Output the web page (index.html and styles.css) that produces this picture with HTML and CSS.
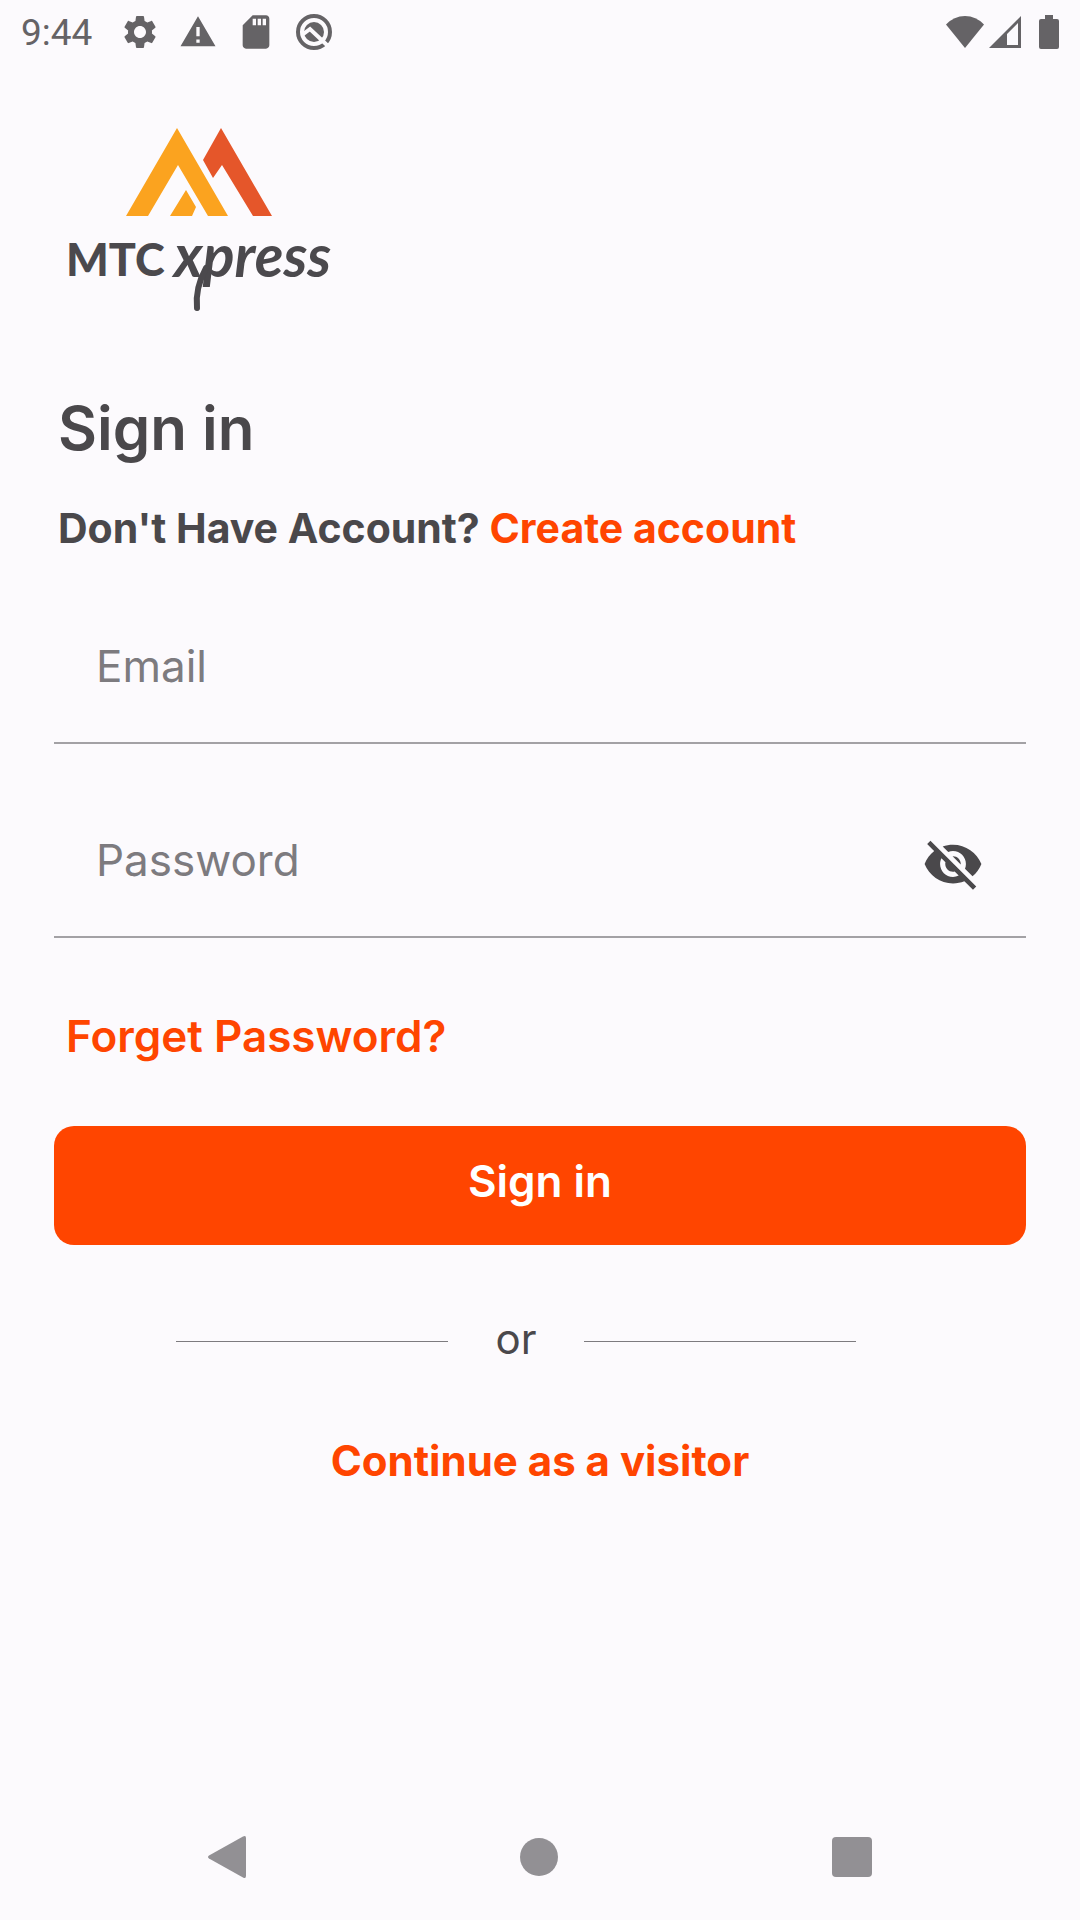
FILE: index.html
```html
<!DOCTYPE html>
<html lang="en">
<head>
    <meta charset="UTF-8">
    <meta name="viewport" content="width=device-width, initial-scale=1.0">
    <title>MTC xpress - Sign in</title>
    <link rel="stylesheet" href="styles.css">
</head>
<body>
    <!-- Status bar -->
    <header class="status-bar">
        <span class="clock">9:44</span>
        <div class="status-left">
            <svg width="40" height="40" viewBox="0 0 24 24"><path d="M19.14 12.94c.04-.3.06-.61.06-.94 0-.32-.02-.64-.07-.94l2.03-1.58c.18-.14.23-.41.12-.61l-1.92-3.32c-.12-.22-.37-.29-.59-.22l-2.39.96c-.5-.38-1.03-.7-1.62-.94l-.36-2.54c-.04-.24-.24-.41-.48-.41h-3.84c-.24 0-.43.17-.47.41l-.36 2.54c-.59.24-1.13.57-1.62.94l-2.39-.96c-.22-.08-.47 0-.59.22L2.74 8.87c-.12.21-.08.47.12.61l2.03 1.58c-.05.3-.09.63-.09.94s.02.64.07.94l-2.03 1.58c-.18.14-.23.41-.12.61l1.92 3.32c.12.22.37.29.59.22l2.39-.96c.5.38 1.03.7 1.62.94l.36 2.54c.05.24.24.41.48.41h3.84c.24 0 .44-.17.47-.41l.36-2.54c.59-.24 1.13-.56 1.62-.94l2.39.96c.22.08.47 0 .59-.22l1.92-3.32c.12-.22.07-.47-.12-.61l-2.01-1.58zM12 15.6c-1.98 0-3.6-1.62-3.6-3.6s1.62-3.6 3.6-3.6 3.6 1.62 3.6 3.6-1.62 3.6-3.6 3.6z"/></svg>
            <svg width="40" height="40" viewBox="0 0 24 24"><path d="M1.500 20.500h21L12 2.500zM13 18.500h-2v-2h2v2zm0-4h-2V9h2v5.500z"/></svg>
            <svg width="40" height="40" viewBox="0 0 24 24"><path d="M18 2h-8L4.020 8 4 20c0 1.100.9 2 2 2h12c1.100 0 2-.9 2-2V4c0-1.100-.9-2-2-2zm-6 6h-2V4h2v4zm3 0h-2V4h2v4zm3 0h-2V4h2v4z"/></svg>
            <svg width="40" height="40" viewBox="0 0 40 40">
                <circle class="ring" cx="20" cy="20" r="16"/>
                <circle cx="20" cy="20" r="10"/>
                <path class="cut" d="M8 23l8-6 18 17"/>
            </svg>
        </div>
        <div class="status-right">
            <svg width="40" height="34" viewBox="0 0 40 34"><path d="M20 33L1 9.500Q9 1 20 1t19 8.500z"/></svg>
            <svg width="34" height="34" viewBox="0 0 34 34"><path fill-rule="evenodd" d="M1 33L33 1v32zM19 19v11h11V8z"/></svg>
            <svg class="battery" width="20" height="34" viewBox="0 0 20 34"><path d="M6 0h8v4h4a2 2 0 0 1 2 2v26a2 2 0 0 1-2 2H2a2 2 0 0 1-2-2V6a2 2 0 0 1 2-2h4z"/></svg>
        </div>
    </header>

    <main class="content">
        <svg class="logo" width="300" height="220" viewBox="0 0 300 220" role="img" aria-label="MTC xpress">
            <path fill="#fba31f" d="M127 18l51 88h-20l-30-51-30 51H76zM136 80l10 17-4 9h-22z"/>
            <path fill="#e5562a" d="M171 18l51 88h-19l-31-51-9 13-10-18z"/>
            <text class="logo-mtc" x="16" y="166">MTC</text>
            <text class="logo-xpress" x="124" y="167">xpress</text>
            <path class="logo-tail" d="M156 158Q145 178 147 198"/>
        </svg>

        <h1>Sign in</h1>
        <p class="signup">Don't Have Account? <a href="#">Create account</a></p>

        <form>
            <div class="field">
                <input type="email" placeholder="Email" aria-label="Email">
            </div>
            <div class="field">
                <input type="password" placeholder="Password" aria-label="Password">
                <button type="button" class="toggle" aria-label="Show password">
                    <svg width="62" height="62" viewBox="0 0 24 24"><path d="M12 7c2.760 0 5 2.240 5 5 0 .65-.13 1.260-.36 1.830l2.920 2.920c1.510-1.260 2.700-2.890 3.430-4.750-1.730-4.390-6-7.500-11-7.500-1.400 0-2.740.25-3.980.7l2.160 2.160C10.740 7.130 11.350 7 12 7zM2 4.270l2.280 2.280.46.46C3.080 8.300 1.780 10.020 1 12c1.730 4.390 6 7.500 11 7.500 1.550 0 3.030-.3 4.380-.84l.42.42L19.730 22 21 20.730 3.270 3 2 4.270zM7.530 9.800l1.550 1.550c-.05.21-.08.43-.08.65 0 1.660 1.340 3 3 3 .22 0 .44-.03.65-.08l1.550 1.550c-.67.33-1.410.53-2.200.53-2.760 0-5-2.240-5-5 0-.79.2-1.530.53-2.200zm4.310-.78l3.150 3.150.02-.16c0-1.660-1.340-3-3-3l-.17.01z"/></svg>
                </button>
            </div>
            <a class="forget" href="#">Forget Password?</a>
            <button type="submit" class="submit">Sign in</button>
        </form>

        <div class="divider"><span>or</span></div>
        <a class="visitor" href="#">Continue as a visitor</a>
    </main>

    <!-- Navigation bar -->
    <nav class="nav-bar">
        <button type="button" aria-label="Back"><svg width="38" height="42" viewBox="0 0 38 42"><path d="M35 .5q3-1.500 3 1.500v38q0 3-3 1.500L1 22.500q-2-1.500 0-3z"/></svg></button>
        <button type="button" aria-label="Home"><svg width="38" height="38" viewBox="0 0 38 38"><circle cx="19" cy="19" r="19"/></svg></button>
        <button type="button" aria-label="Recent apps"><svg width="40" height="40" viewBox="0 0 40 40"><rect width="40" height="40" rx="4"/></svg></button>
    </nav>
</body>
</html>
```

FILE: styles.css
```css
* {
    box-sizing: border-box;
}
body {
    display: flex;
    flex-direction: column;
    min-height: 100vh;
    margin: 0;
    background-color: #fcfafd;
    color: #4a484b;
    font-family: Inter, "Open Sans", sans-serif;
}
svg {
    display: block;
}
a {
    color: #ff4500; /* Brand orange */
    text-decoration: none;
}
button {
    padding: 0;
    border: none;
    background: none;
    font-family: inherit;
    cursor: pointer;
}

/* Status bar */
.status-bar {
    display: flex;
    align-items: center;
    height: 64px;
    padding: 0 21px;
    fill: #656366;
}
.clock {
    color: #656366;
    font-family: Roboto, sans-serif;
    font-size: 37px;
}
.status-left {
    display: flex;
    gap: 18px;
    margin-left: 28px;
}
.status-right {
    display: flex;
    gap: 3px;
    margin-left: auto;
}
.battery {
    margin-left: 14px;
}
.ring {
    fill: none;
    stroke: #656366;
    stroke-width: 4;
}
.cut {
    fill: none;
    stroke: #fcfafd;
    stroke-width: 4;
}

/* Page content */
.content {
    display: flex;
    flex: 1;
    flex-direction: column;
    padding: 46px 54px 0;
}
.logo {
    margin-left: -4px;
    fill: #4b494d;
}
.logo-mtc {
    font-family: Lato, sans-serif;
    font-size: 45px;
    font-weight: 900;
}
.logo-xpress {
    font-family: Lato, sans-serif;
    font-size: 59px;
    font-style: italic;
    font-weight: bold;
}
.logo-tail {
    fill: none;
    stroke: #4b494d;
    stroke-width: 6;
    stroke-linecap: round;
}
h1 {
    margin: 62px 4px 40px;
    font-size: 60px;
    font-weight: 600;
    line-height: 72px;
}
.signup {
    margin: 0 4px 38px;
    font-size: 41px;
    font-weight: bold;
    line-height: 48px;
}
form {
    display: flex;
    flex-direction: column;
}
.field {
    display: flex;
    align-items: center;
    margin-bottom: 40px;
    padding: 0 42px;
    border-bottom: 2px solid #a3a1a5;
}
.field input {
    flex: 1;
    min-width: 0;
    height: 152px;
    padding: 0;
    border: none;
    outline: none;
    background: none;
    color: #4a484b;
    font-family: inherit;
    font-size: 44px;
}
.field input::placeholder {
    color: #7d7b7f;
    opacity: 1;
}
.toggle {
    padding-top: 8px;
    fill: #4a484b;
}
.forget {
    align-self: flex-start;
    margin: 34px 12px 66px;
    font-size: 44px;
    font-weight: 600;
    line-height: 48px;
}
.submit {
    height: 119px;
    padding-bottom: 10px;
    border-radius: 20px;
    background-color: #ff4500;
    color: white;
    font-size: 44px;
    font-weight: 600;
}
.divider {
    display: flex;
    align-items: center;
    margin: 70px 170px 70px 122px;
    font-size: 42px;
    line-height: 48px;
}
.divider::before,
.divider::after {
    content: "";
    flex: 1;
    height: 1px;
    background-color: #7d7b7f;
}
.divider span {
    width: 136px;
    padding-bottom: 4px;
    text-align: center;
}
.visitor {
    align-self: center;
    font-size: 42px;
    font-weight: bold;
    line-height: 48px;
}

/* Navigation bar */
.nav-bar {
    display: flex;
    align-items: center;
    justify-content: space-between;
    height: 126px;
    padding: 0 208px;
}
.nav-bar svg {
    fill: #929094;
}
```
